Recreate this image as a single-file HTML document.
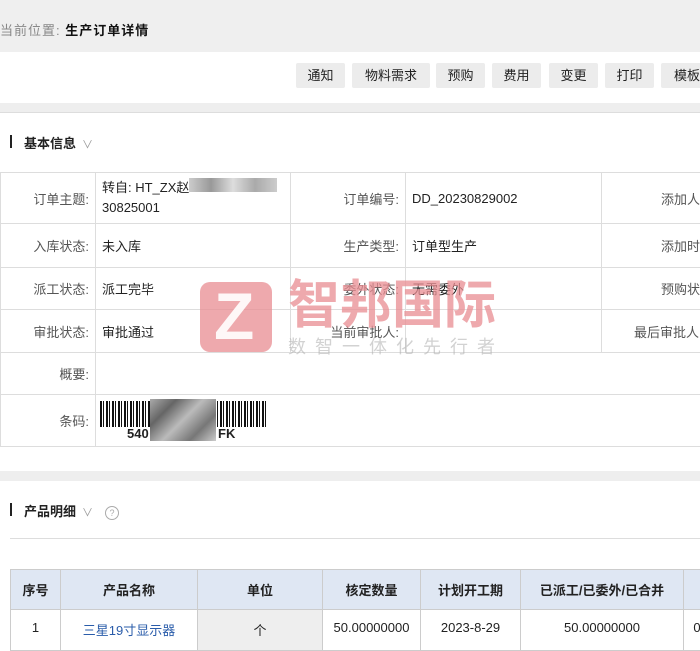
<!DOCTYPE html>
<html><head><meta charset="utf-8"><style>
body{margin:0;width:700px;height:633px;overflow:hidden;background:#fff;font-family:"Liberation Sans","Noto Sans CJK SC",sans-serif;font-size:13px;color:#222;position:relative}
.abs{position:absolute}
.top{left:0;top:0;width:700px;height:52px;background:#efefef}
.bc{left:0;top:20px;font-size:13px;letter-spacing:1px;color:#888}
.bc b{color:#111}
.tb{left:0;top:52px;width:700px;height:51px;background:#fff}
.btn{top:63px;height:25px;line-height:25px;background:#ececec;text-align:center;font-size:13px;color:#222;border-radius:2px}
.gs{left:0;width:700px;background:#eeeeee}
.sec{font-weight:bold;font-size:13px}
.sec:before{content:"";position:absolute;left:-14px;top:2px;width:2px;height:13px;background:#222}
.chev{color:#999;font-weight:normal;margin-left:6px;font-size:11px}
table.info{position:absolute;left:0;top:172px;border-collapse:collapse;width:720px}
table.info td{border:1px solid #ddd;padding:0 6px;font-size:13px}
table.info td.l{text-align:right;color:#555}
table.pd{position:absolute;left:10px;top:569px;border-collapse:collapse;table-layout:fixed;width:700px}
table.pd th{background:#dfe7f3;border:1px solid #ccc;height:39px;font-size:13px;font-weight:bold;padding:0}
table.pd td{border:1px solid #ccc;height:30px;text-align:center;vertical-align:top;padding:10px 0 0}
</style></head><body>
<div class="abs top"></div>
<div class="abs bc">当前位置: <b>生产订单详情</b></div>
<div class="abs tb"></div>
<div class="abs btn" style="left:296px;width:49px">通知</div>
<div class="abs btn" style="left:352px;width:78px">物料需求</div>
<div class="abs btn" style="left:436px;width:49px">预购</div>
<div class="abs btn" style="left:492px;width:49px">费用</div>
<div class="abs btn" style="left:549px;width:49px">变更</div>
<div class="abs btn" style="left:605px;width:49px">打印</div>
<div class="abs btn" style="left:661px;width:49px;text-align:left;padding-left:13px">模板</div>
<div class="abs gs" style="top:103px;height:9px;border-bottom:1px solid #ddd"></div>
<div class="abs sec" style="left:24px;top:133px">基本信息<span class="chev">∨</span></div>
<table class="info">
<tr style="height:51px"><td class="l" style="width:82px">订单主题:</td><td style="width:182px;line-height:20px">转自: HT_ZX赵<span style="display:inline-block;width:88px;height:14px;background:linear-gradient(90deg,#ccc,#999,#ddd,#aaa,#ccc)"></span><br>30825001</td><td class="l" style="width:102px">订单编号:</td><td style="width:183px">DD_20230829002</td><td class="l">添加人员</td></tr>
<tr style="height:44px"><td class="l">入库状态:</td><td>未入库</td><td class="l">生产类型:</td><td>订单型生产</td><td class="l">添加时间</td></tr>
<tr style="height:42px"><td class="l">派工状态:</td><td>派工完毕</td><td class="l">委外状态:</td><td>无需委外</td><td class="l">预购状态</td></tr>
<tr style="height:43px"><td class="l">审批状态:</td><td>审批通过</td><td class="l">当前审批人:</td><td></td><td class="l" style="padding-right:20px">最后审批人</td></tr>
<tr style="height:42px"><td class="l">概要:</td><td colspan="4"></td></tr>
<tr style="height:52px"><td class="l">条码:</td><td colspan="4"></td></tr>
</table>
<div class="abs" style="left:100px;top:401px;width:166px;height:26px;background:repeating-linear-gradient(90deg,#111 0 2px,#fff 2px 3px,#111 3px 4px,#fff 4px 6px)"></div>
<div class="abs" style="left:150px;top:399px;width:66px;height:42px;background:linear-gradient(135deg,#aaa,#666,#bbb,#777,#ccc)"></div>
<div class="abs" style="left:127px;top:426px;font-weight:bold;font-size:13px">540</div>
<div class="abs" style="left:218px;top:426px;font-weight:bold;font-size:13px">FK</div>
<!-- watermark -->
<div class="abs" style="left:200px;top:282px;width:72px;height:70px;background:rgba(232,140,146,.75);border-radius:10px"></div>
<div class="abs" style="left:214px;top:280px;color:rgba(255,255,255,.9);font-size:66px;font-weight:bold;line-height:72px">Z</div>
<div class="abs" style="left:288px;top:276px;color:rgba(232,140,146,.75);font-size:52px;font-weight:bold;line-height:60px">智邦国际</div>
<div class="abs" style="left:288px;top:333px;color:rgba(180,180,180,.6);font-size:18px;letter-spacing:9px">数智一体化先行者</div>
<div class="abs gs" style="top:471px;height:10px"></div>
<div class="abs sec" style="left:24px;top:501px">产品明细<span class="chev">∨</span><span style="display:inline-block;margin-left:12px;width:12px;height:12px;border:1px solid #aaa;border-radius:50%;font-size:9px;color:#aaa;text-align:center;line-height:12px;font-weight:normal">?</span></div>
<div class="abs" style="left:10px;top:538px;width:690px;height:1px;background:#ddd"></div>
<table class="pd">
<colgroup><col style="width:50px"><col style="width:137px"><col style="width:125px"><col style="width:98px"><col style="width:100px"><col style="width:163px"><col style="width:27px"></colgroup>
<tr><th>序号</th><th>产品名称</th><th>单位</th><th>核定数量</th><th>计划开工期</th><th>已派工/已委外/已合并</th><th></th></tr>
<tr><td>1</td><td style="color:#2a5caa">三星19寸显示器</td><td style="background:#eee">个</td><td>50.00000000</td><td>2023-8-29</td><td>50.00000000</td><td>0</td></tr>
</table>
</body></html>
